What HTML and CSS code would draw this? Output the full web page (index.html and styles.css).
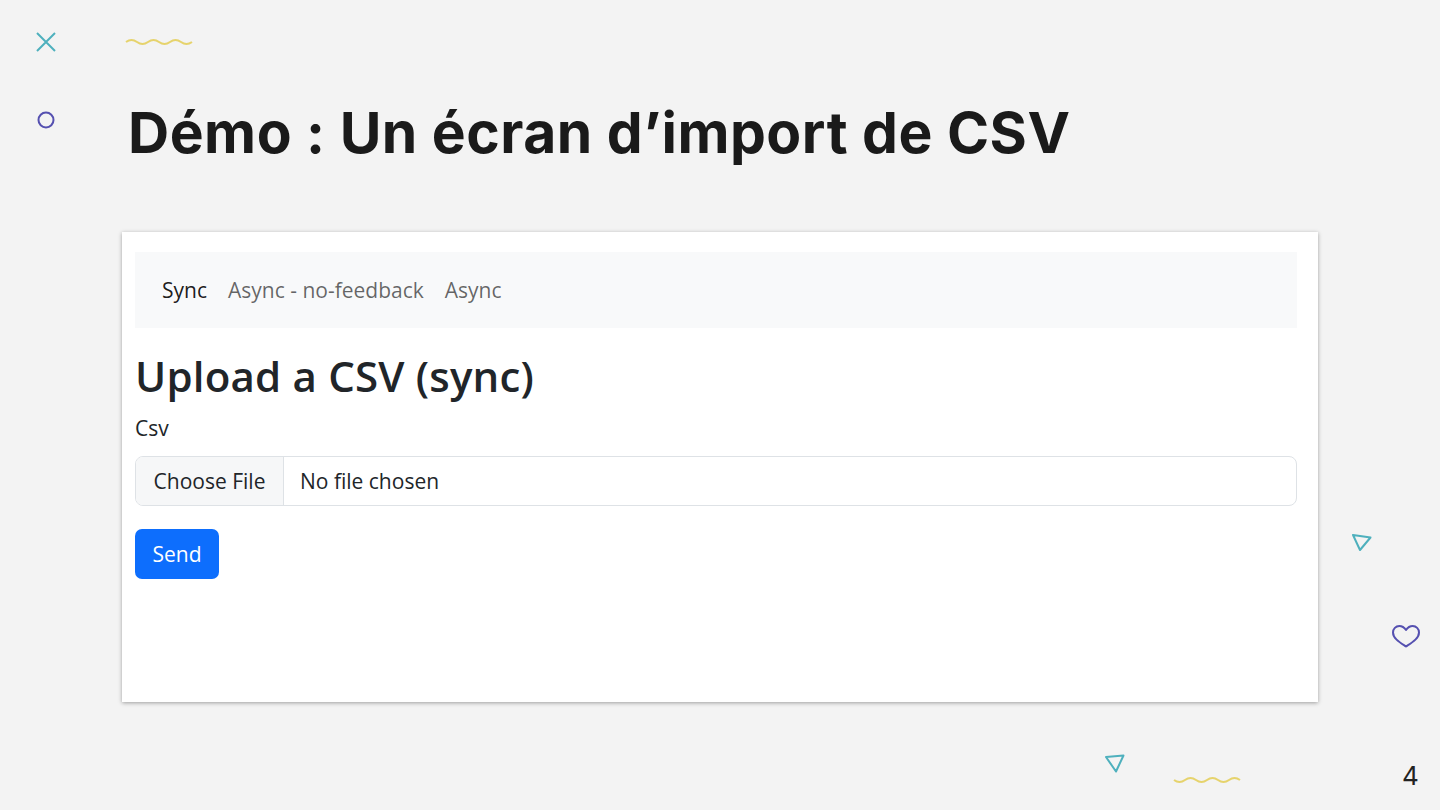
FILE: index.html
```html
<!DOCTYPE html>
<html lang="fr">
<head>
<meta charset="utf-8">
<title>Démo : Un écran d’import de CSV</title>
<link rel="stylesheet" href="styles.css">
</head>
<body>
<div class="slide">
  <svg class="deco deco-x" width="22" height="22" viewBox="0 0 22 22"><path d="M2 2 L20 20 M20 2 L2 20" stroke="#4eb0bd" stroke-width="2" fill="none"/></svg>
  <svg class="deco deco-wave1" width="70" height="10" viewBox="0 0 70 10"><path d="M1 4 Q6.5 0 12 4 T23 4 T34 4 T45 4 T56 4 T67 4" stroke="#e6d36c" stroke-width="2" fill="none"/></svg>
  <svg class="deco deco-circle" width="20" height="20" viewBox="0 0 20 20"><circle cx="10" cy="10" r="7.5" stroke="#5550b0" stroke-width="2" fill="none"/></svg>
  <svg class="deco deco-tri1" width="22" height="20" viewBox="0 0 22 20"><path d="M2 2 L19.5 4.5 L9 17 Z" stroke="#4eb0bd" stroke-width="2" fill="none" stroke-linejoin="round"/></svg>
  <svg class="deco deco-heart" width="30" height="25" viewBox="0 0 30 25"><path d="M15 22.5 C9 18.5 2 14.5 2 8.5 C2 4.8 4.8 2 8.3 2 C11.2 2 13.5 3.8 15 6 C16.5 3.8 18.8 2 21.7 2 C25.2 2 28 4.8 28 8.5 C28 14.5 21 18.5 15 22.5 Z" stroke="#5550b0" stroke-width="2" fill="none" stroke-linejoin="round"/></svg>
  <svg class="deco deco-tri2" width="22" height="20" viewBox="0 0 22 20"><path d="M2 3 L19.5 1.5 L12 17.5 Z" stroke="#4eb0bd" stroke-width="2" fill="none" stroke-linejoin="round"/></svg>
  <svg class="deco deco-wave2" width="70" height="10" viewBox="0 0 70 10"><path d="M1 4 Q6.5 8 12 4 T23 4 T34 4 T45 4 T56 4 T67 4" stroke="#e6d36c" stroke-width="2" fill="none"/></svg>

  <h1 class="title">Démo : Un écran d’import de CSV</h1>

  <div class="card">
    <nav class="nav">
      <span class="nav-link active">Sync</span>
      <span class="nav-link">Async - no-feedback</span>
      <span class="nav-link">Async</span>
    </nav>
    <h2 class="heading">Upload a CSV (sync)</h2>
    <div class="label">Csv</div>
    <div class="file-input">
      <span class="file-btn">Choose File</span>
      <span class="file-name">No file chosen</span>
    </div>
    <div class="send">Send</div>
  </div>

  <div class="page-num">4</div>
</div>
</body>
</html>
```

FILE: styles.css
```css
html, body {
  margin: 0;
  padding: 0;
}
body {
  background: #f3f3f3;
  width: 1440px;
  height: 810px;
  overflow: hidden;
}
.slide {
  position: relative;
  width: 1440px;
  height: 810px;
  padding-left: 122px;
  box-sizing: border-box;
}
.deco {
  position: absolute;
  display: block;
}
.deco-x { left: 35px; top: 31px; }
.deco-wave1 { left: 125px; top: 38px; }
.deco-circle { left: 36px; top: 110px; }
.deco-tri1 { left: 1351px; top: 533px; }
.deco-heart { left: 1391px; top: 624px; }
.deco-tri2 { left: 1104px; top: 754px; }
.deco-wave2 { left: 1173px; top: 776px; }

.title {
  margin: 0;
  padding: 99px 0 0 6px;
  height: 68px;
  line-height: 68px;
  font-family: "Inter", "Liberation Sans", sans-serif;
  font-weight: 700;
  font-size: 57px;
  letter-spacing: 0.5px;
  color: #1a1a1a;
  white-space: nowrap;
}

.card {
  margin-top: 65px;
  width: 1196px;
  height: 470px;
  box-sizing: border-box;
  background: #fff;
  box-shadow: 0 1px 4px rgba(0, 0, 0, 0.35);
  padding: 20px 21px 0 13px;
  font-family: "Open Sans", "Noto Sans", sans-serif;
  color: #212529;
}
.nav {
  height: 76px;
  background: #f8f9fa;
  display: flex;
  align-items: center;
  gap: 21px;
  padding-left: 27px;
  font-size: 21px;
  color: rgba(0, 0, 0, 0.6);
}
.nav-link.active {
  color: rgba(0, 0, 0, 0.9);
}
.heading {
  margin: 22px 0 0 0;
  font-size: 42px;
  line-height: 52px;
  font-weight: 600;
  letter-spacing: 0.2px;
  color: #212529;
}
.label {
  margin-top: 11px;
  font-size: 21px;
  line-height: 30px;
}
.file-input {
  margin-top: 13px;
  height: 50px;
  box-sizing: border-box;
  border: 1px solid #dee2e6;
  border-radius: 8px;
  display: flex;
  align-items: stretch;
  overflow: hidden;
  font-size: 21px;
}
.file-btn {
  width: 148px;
  box-sizing: border-box;
  background: #f6f7f8;
  border-right: 1px solid #dee2e6;
  display: flex;
  align-items: center;
  justify-content: center;
}
.file-name {
  display: flex;
  align-items: center;
  padding-left: 16px;
}
.send {
  margin-top: 23px;
  width: 84px;
  height: 50px;
  background: #0d6efd;
  border-radius: 7px;
  color: #fff;
  font-size: 21px;
  display: flex;
  align-items: center;
  justify-content: center;
}
.page-num {
  position: absolute;
  left: 1402px;
  top: 760px;
  font-family: "Inter", "Liberation Sans", sans-serif;
  font-size: 26px;
  line-height: 32px;
  color: #222;
}
```
